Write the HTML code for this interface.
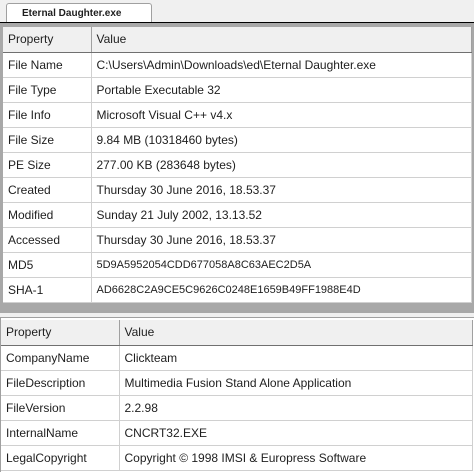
<!DOCTYPE html>
<html><head><style>
body{margin:0;width:474px;height:471px;overflow:hidden;background:#f0f0f0;font-family:"Liberation Sans",sans-serif;font-size:12px;color:#1e1e1e;position:relative}
.a{position:absolute}
table{border-collapse:collapse;position:absolute;background:#fff;table-layout:fixed;font-size:12px}
td{height:25px;box-sizing:border-box;border-bottom:1px solid #d0d0d0;border-right:1px solid #d0d0d0;padding:0 0 0 5px;white-space:nowrap;overflow:hidden}
tr.h td{background:#f0f0f0;border-bottom:1px solid #707070;border-right:1px solid #a0a0a0}
</style></head><body>
<div class="a" style="left:0;top:22px;width:474px;height:1px;background:#000"></div>
<div class="a" style="left:6px;top:3px;width:146px;height:19px;background:#fff;border:1px solid #a0a0a0;border-bottom:none;border-radius:3px 3px 0 0;font-weight:bold;font-size:10px;line-height:20px;padding-left:15px;box-sizing:border-box">Eternal Daughter.exe</div>
<div class="a" style="left:0;top:23px;width:474px;height:290px;background:#a8a8a8"></div>
<table style="left:3px;top:27px;width:468px">
<col style="width:88px"><col style="width:380px">
<tr class="h"><td>Property</td><td>Value</td></tr>
<tr><td>File Name</td><td>C:\Users\Admin\Downloads\ed\Eternal Daughter.exe</td></tr>
<tr><td>File Type</td><td>Portable Executable 32</td></tr>
<tr><td>File Info</td><td>Microsoft Visual C++ v4.x</td></tr>
<tr><td>File Size</td><td>9.84 MB (10318460 bytes)</td></tr>
<tr><td>PE Size</td><td>277.00 KB (283648 bytes)</td></tr>
<tr><td>Created</td><td>Thursday 30 June 2016, 18.53.37</td></tr>
<tr><td>Modified</td><td>Sunday 21 July 2002, 13.13.52</td></tr>
<tr><td>Accessed</td><td>Thursday 30 June 2016, 18.53.37</td></tr>
<tr><td>MD5</td><td style="font-size:11px">5D9A5952054CDD677058A8C63AEC2D5A</td></tr>
<tr><td>SHA-1</td><td style="font-size:11px">AD6628C2A9CE5C9626C0248E1659B49FF1988E4D</td></tr>
</table>
<div class="a" style="left:0;top:317px;width:474px;height:154px;background:#fff;border-left:1px solid #a0a0a0;border-top:1px solid #a0a0a0"></div>
<table style="left:1px;top:320px;width:471px">
<col style="width:118px"><col style="width:353px">
<tr class="h"><td>Property</td><td>Value</td></tr>
<tr><td>CompanyName</td><td>Clickteam</td></tr>
<tr><td>FileDescription</td><td>Multimedia Fusion Stand Alone Application</td></tr>
<tr><td>FileVersion</td><td>2.2.98</td></tr>
<tr><td>InternalName</td><td>CNCRT32.EXE</td></tr>
<tr><td>LegalCopyright</td><td>Copyright © 1998 IMSI &amp; Europress Software</td></tr>
</table>
</body></html>
